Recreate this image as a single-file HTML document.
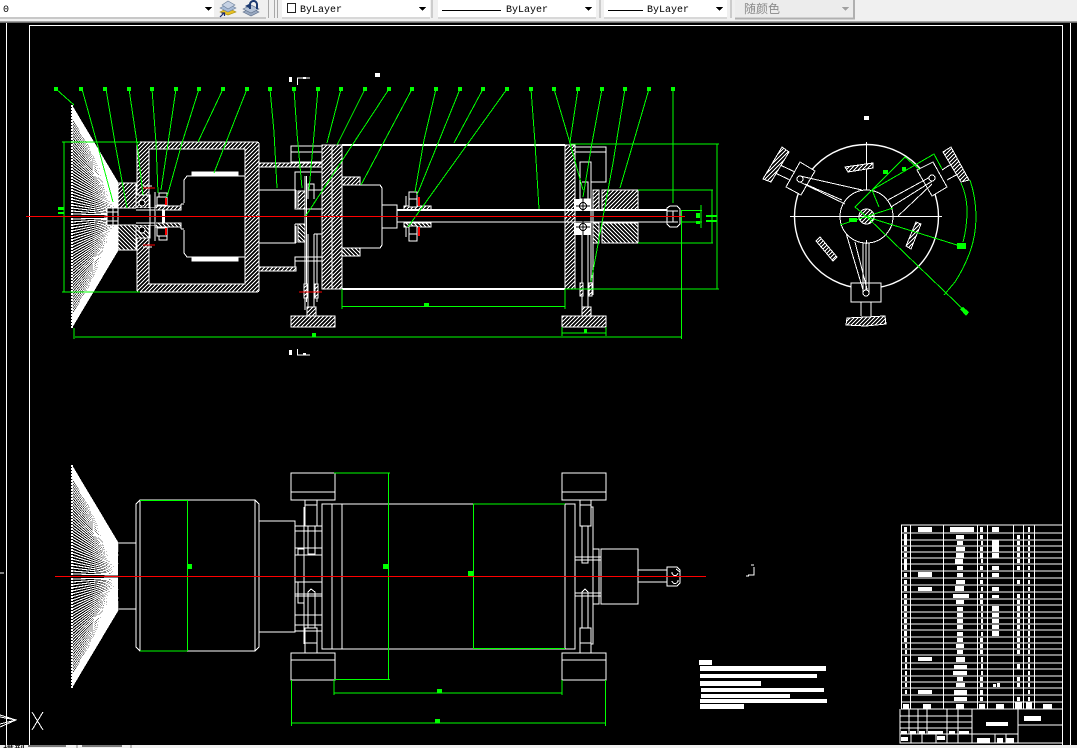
<!DOCTYPE html>
<html><head><meta charset="utf-8"><style>
html,body{margin:0;padding:0;width:1077px;height:748px;overflow:hidden;background:#000}
svg{display:block;position:absolute;left:0;top:0}
text{font-family:"Liberation Mono","Noto Sans CJK SC",monospace;font-size:10px;fill:#000}
</style></head><body>
<svg width="1077" height="748" viewBox="0 0 1077 748" xmlns="http://www.w3.org/2000/svg" shape-rendering="crispEdges">
<defs>
<pattern id="h" width="4" height="4" patternUnits="userSpaceOnUse"><rect width="4" height="4" fill="#000"/><path d="M-1 1L1 -1M0 4L4 0M3 5L5 3" stroke="#fff" stroke-width="1.2" fill="none"/></pattern>
<g id="brush"><path d="M72 214L118 215M72 211L118 214.5M72 208L118 213.6M72 205L118 212.7M72 202L118 211.8M72 199L118 210.9M72 196L118 210M72 193L118 209M72 190L118 208M72 187L118 207M72 184L118 206.4M72 181L118 205.5M72 178L118 204.6M72 175L118 203.7M72 172L118 202.8M72 169L118 201.9M72 166L118 201M72 163L118 200M72 160L118 199M72 157L118 198M72 154L118 197.4M72 151L118 196.5M72 148L118 195.6M72 145L118 194.7M72 142L118 193.8M72 139L118 192.9M72 136L118 192M72 133L118 191M72 130L118 190M72 127L118 189M72 124L118 188.4M72 121L118 187.5M72 118L118 186.6M72 115L118 185.7M72 112L118 184.8M72 109L118 183.9M72 106L118 183" stroke="#fff" stroke-width="1.1" fill="none"/><polygon points="72,105 118,183 118,190 108,178 72,118" fill="#fff"/><path d="M72 105V216" stroke="#fff" stroke-width="2" stroke-dasharray="2 1" fill="none"/></g>
<g id="tvh" fill="none" stroke="#fff">
<rect x="118" y="183" width="18" height="25" fill="url(#h)"/>
<rect x="136" y="195" width="14" height="13" fill="url(#h)"/><circle cx="142" cy="203" r="3" fill="#000"/>
<path d="M149 182V208M143 186H152M155 192V206M136 208H155"/>
<rect x="157" y="197" width="10" height="8" fill="#000"/><rect x="159" y="193" width="8" height="4" fill="#000"/>
<rect x="155" y="206" width="26" height="4" fill="url(#h)"/>
<path d="M184 203V180L187 176H245M181 204H184M181 204V210"/>
<rect x="192" y="172" width="46" height="3" fill="#fff"/>
<path d="M166 198V205" stroke="#f00" stroke-width="2"/>
<path d="M143 188H155" stroke="#f00"/>
<rect x="298" y="191" width="7" height="18" fill="url(#h)"/>
<rect x="342" y="177" width="18" height="8" fill="url(#h)"/>
<rect x="404" y="206" width="27" height="4" fill="url(#h)"/>
<rect x="409" y="192" width="8" height="15" fill="#000"/><path d="M406 196V206M409 199H417"/>
<path d="M419 197V206" stroke="#f00" stroke-width="2"/>
<rect x="593" y="190" width="6" height="20" fill="url(#h)"/>
<rect x="602" y="190" width="36" height="20" fill="url(#h)"/>
</g>
<g id="plan" fill="none" stroke="#fff">
<path d="M308 590V556M315 590V556"/>
</g>
</defs>
<rect width="1077" height="748" fill="#000"/>

<!-- drawing frame -->
<g fill="none" stroke="#fff">
<path d="M6.5 23V745"/>
<rect x="29.5" y="25.5" width="1033" height="720"/>
<path d="M1070.5 23V745"/>
<path d="M0 573H4"/>
<path d="M0 715L16 720L0 727M0 717L16 720L0 724"/>
<path d="M32 712L43 730M43 712L32 730"/>
</g>

<!-- top view -->
<use href="#brush"/><use href="#brush" transform="matrix(1 0 0 -1 0 433)"/>
<rect x="137" y="142" width="122" height="150" rx="2" fill="url(#h)" stroke="#fff"/>
<rect x="149" y="149" width="96" height="135" fill="#000" stroke="#fff"/>
<rect x="259" y="163" width="64" height="4" fill="url(#h)" stroke="#fff"/>
<rect x="259" y="267" width="37" height="4" fill="url(#h)" stroke="#fff"/>
<path d="M259 190H296M259 243H296M296 243V226M296 190V208" stroke="#fff" fill="none"/>
<rect x="107" y="208" width="11" height="17" fill="#000" stroke="#fff"/>
<path d="M113 208V225M107 212H118M107 221H118" stroke="#fff" fill="none"/>
<use href="#tvh"/><use href="#tvh" transform="matrix(1 0 0 -1 0 433)"/>
<rect x="162" y="210" width="3" height="13" fill="#fff"/>
<rect x="136" y="208" width="20" height="17" fill="#000"/>
<path d="M136 210H155M136 223H155M150 208V225M155 208V225" stroke="#fff" fill="none"/>

<g fill="none" stroke="#fff">
<rect x="291" y="146" width="31" height="16"/><path d="M291 152H322"/>
<rect x="295" y="172" width="27" height="37"/>
<path d="M295 224H305M295 224V243M322 257H295V267M295 261H322"/>
<path d="M305 176V302M306.5 176V302M317 234V298M314 234V307M308 234V307M305 293V310M317 285V302"/>
<path d="M308 199V184H314V199M308 190H322M314 234H322V257"/>
</g>
<rect x="307" y="307" width="9" height="9" fill="url(#h)" stroke="#fff"/>
<rect x="291" y="316" width="44" height="11" fill="url(#h)" stroke="#fff"/>
<rect x="304" y="284" width="3" height="14" fill="url(#h)" stroke="#fff"/><rect x="315" y="284" width="3" height="14" fill="url(#h)" stroke="#fff"/>
<path d="M299 292H322" stroke="#f00"/>

<rect x="322" y="145" width="10" height="144" fill="url(#h)" stroke="#fff"/>
<rect x="332" y="145" width="10" height="144" fill="url(#h)" stroke="#fff"/>
<rect x="565" y="145" width="10" height="144" fill="url(#h)" stroke="#fff"/>
<path d="M342 145H565M342 289H565" stroke="#fff" stroke-width="2" fill="none"/>
<path d="M342 185H380L382 188V245L380 248H342Z" fill="#000" stroke="#fff"/>
<path d="M382 205H397V228H382M397 205V228" fill="none" stroke="#fff"/>
<path d="M397 210H667" stroke="#fff" stroke-width="2" fill="none"/>
<path d="M397 222H667" stroke="#fff" fill="none"/>

<g fill="none" stroke="#fff">
<path d="M575 147H606V182H591M575 152H606"/>
<rect x="580" y="162" width="11" height="37" fill="#000"/>
<path d="M582 182H588V199M591 177V295M593 190V295M582 235V307M588 235V307M580 283V295"/>
<rect x="580" y="283" width="3" height="13" fill="url(#h)"/><rect x="589" y="283" width="3" height="13" fill="url(#h)"/>
</g>
<rect x="574" y="199" width="17" height="11" fill="#fff"/><rect x="574" y="223" width="17" height="12" fill="#fff"/>
<path d="M583 197V211M576 206H590M583 221V237M576 227H590" stroke="#000" fill="none"/>
<circle cx="583" cy="206" r="3.5" fill="none" stroke="#000"/><circle cx="583" cy="227" r="3.5" fill="none" stroke="#000"/>
<rect x="582" y="307" width="9" height="9" fill="url(#h)" stroke="#fff"/>
<rect x="562" y="316" width="44" height="11" fill="url(#h)" stroke="#fff"/>
<path d="M667 208L670 206H677L680 209V224L677 227H670L667 224ZM667 211H678M667 222H678M673 211V222" fill="#000" stroke="#fff"/>

<!-- section marks -->
<g fill="#fff"><rect x="289" y="77" width="3" height="5"/><rect x="375" y="73" width="5" height="4"/><rect x="303" y="77" width="3" height="2"/><rect x="289" y="350" width="3" height="5"/><rect x="303" y="353" width="3" height="2"/><rect x="864" y="116" width="5" height="4"/></g>
<path d="M297.500 85V78H310M297.500 349V355H310" fill="none" stroke="#fff"/>

<!-- top leaders -->
<g fill="none" stroke="#0f0">
<path d="M56 89L74 105M82 89L97 143L113 202M106 89L115 143L127 208M129 89L137 143L143 195M152 89L156 143L158 193M176 89L167 150L161 190M199 89L182 143L167 197M223 89L198 142M247 89L223 150L214 173M270 89L274 132L277 188M294 89L297 133L302 188M318 89L312 157L309 190M341 89L327 143M365 89L337 145M389 89L305 217M412 89L361 185M436 89L424 140L415 192M460 89L417 195M483 89L454 143M507 89L408 227M531 89L535 143L539 209M554 89L570 143L583 190M578 89L570 142M602 89L592 143L583 197M625 89L613 163L591 282M649 89L620 188M673 89V203"/>
<path d="M62 142H140M62 292H140M64 142V292M74 328V339M75 337H682M681.500 210V339M342 289V309M565 289V309M342 306.500H565M562 327V336M606 327V336M562 333H606M570 144H719M565 289H719M717 144V289M638 190H713M638 243H713M712 190V243M682 210.500H702M682 222H702M701 205V228"/>
</g>
<g fill="#0f0">
<rect x="54" y="87" width="4" height="4"/><rect x="79" y="87" width="4" height="4"/><rect x="103" y="87" width="4" height="4"/><rect x="127" y="87" width="4" height="4"/><rect x="150" y="87" width="4" height="4"/><rect x="174" y="87" width="4" height="4"/><rect x="197" y="87" width="4" height="4"/><rect x="221" y="87" width="4" height="4"/><rect x="245" y="87" width="4" height="4"/><rect x="268" y="87" width="4" height="4"/><rect x="292" y="87" width="4" height="4"/><rect x="316" y="87" width="4" height="4"/><rect x="339" y="87" width="4" height="4"/><rect x="363" y="87" width="4" height="4"/><rect x="387" y="87" width="4" height="4"/><rect x="410" y="87" width="4" height="4"/><rect x="434" y="87" width="4" height="4"/><rect x="458" y="87" width="4" height="4"/><rect x="481" y="87" width="4" height="4"/><rect x="505" y="87" width="4" height="4"/><rect x="529" y="87" width="4" height="4"/><rect x="552" y="87" width="4" height="4"/><rect x="576" y="87" width="4" height="4"/><rect x="600" y="87" width="4" height="4"/><rect x="623" y="87" width="4" height="4"/><rect x="647" y="87" width="4" height="4"/><rect x="671" y="87" width="4" height="4"/>
<rect x="312" y="333" width="4" height="4"/><rect x="424" y="303" width="5" height="4"/><rect x="584" y="329" width="3" height="4"/><rect x="58" y="207" width="6" height="3"/><rect x="58" y="212" width="6" height="2"/><rect x="696" y="213" width="4" height="5"/><rect x="696" y="221" width="4" height="3"/><rect x="706" y="215" width="11" height="2"/><rect x="706" y="220" width="11" height="2"/>
</g>
<path d="M26 216.500H685" stroke="#f00" fill="none"/>

<!-- side view -->
<g fill="none" stroke="#fff">
<circle cx="866.500" cy="216.500" r="72" shape-rendering="auto" stroke-width="1.4"/>
<circle cx="866.500" cy="216.500" r="26.500" fill="#000"/>
<circle cx="866.500" cy="216.500" r="7.500" fill="url(#h)"/>
<path d="M790 216.500H942M866.500 142V190M866.500 240V244"/>
<polygon points="800,162 815,171 801,195 786,187" fill="#000"/>
<polygon points="933,162 947,187 932,196 917,170" fill="#000"/>
<rect x="851" y="283" width="30" height="19" fill="#000"/>
<path d="M861 302V316M871 302V316M778 164L795 172M773 172L790 180M942 170L953 163M947 180L958 174"/>
<polygon points="782,147 789,152 771,182 763,179" fill="url(#h)"/>
<polygon points="943,152 951,147 969,180 961,182" fill="url(#h)"/>
<polygon points="847,318 885,316 886,324 866,326 846,325" fill="url(#h)"/>
<path d="M800 176L862 190M800 182L845 204M805 184L842 200M932 176L888 200M934 180L891 207M932 184L898 216M864 293L846 233M868 293L855 242M863 243V293M866 243V293M869 243V293"/>
<circle cx="800" cy="179" r="3" fill="#000"/><circle cx="932" cy="178" r="3" fill="#000"/><circle cx="866" cy="293" r="3" fill="#000"/>
<polygon points="845,167 873,163 873,168 848,172" fill="url(#h)"/>
<polygon points="816,241 820,237 837,257 833,261" fill="url(#h)"/>
<polygon points="916,222 921,224 911,249 906,246" fill="url(#h)"/>
</g>
<g fill="none" stroke="#0f0">
<path d="M961 183Q967 196 967 210Q967 228 963 242M970 180Q976 198 976 217Q976 235 970 252Q964 268 955 282L944 295"/>
<path d="M867 217L968 314M840 225L893 208M867 217L957 245M855 207L905 157L920 170M872 190L934 154L942 169M872 190L855 207L867 217M872 190L879 207"/>
</g>
<g fill="#0f0"><polygon points="960,309 963,307 969,312 966,316"/><rect x="957" y="243" width="9" height="6"/><rect x="883" y="170" width="5" height="4"/><rect x="902" y="167" width="4" height="4"/><rect x="849" y="218" width="8" height="4"/></g>

<!-- plan view -->
<use href="#brush" transform="translate(0 360)"/><use href="#brush" transform="matrix(1 0 0 -1 0 793)"/>
<g fill="none" stroke="#fff">
<path d="M118 543H136M118 609H136"/>
<path d="M140 500H255L259 504V647L255 651H140L136 647V504ZM140 500V651M255 500V651"/>
<rect x="259" y="521" width="36" height="111"/>
<rect x="322" y="504" width="253" height="145"/><path d="M332 504V649M342 504V649M565 504V649"/>
<rect x="291" y="473" width="44" height="27"/><path d="M291 492H335"/>
<rect x="291" y="653" width="44" height="27"/><path d="M291 660H335"/>
<rect x="562" y="473" width="44" height="27"/><path d="M562 492H606"/>
<rect x="562" y="653" width="44" height="27"/><path d="M562 660H606"/>
<path d="M305 500H317V526H305ZM305 505H317M304 507V644M295 526H322M295 531H322M295 548H322M295 555H322M295 526V555M298 548V555M298 549H304"/>
<rect x="308" y="526" width="7" height="28"/>
<path d="M295 582H322M295 582V631H322M298 582V603H304V582M295 594H322M295 596H322M295 615H322M295 625H322"/>
<path d="M308 628V592L311 589L315 592V628"/>
<path d="M305 628H317V653H305ZM305 643H317"/>
<path d="M580 500H591V526H580ZM580 505H591M591 507H593V644H591M575 557H601M575 560H601M575 593H601M575 596H601"/>
<path d="M582 526V563H588V526M582 628V592L585 589L588 592V628"/>
<path d="M580 628H591V653H580ZM580 643H591"/>
<rect x="593" y="549" width="6" height="55"/><rect x="601" y="549" width="37" height="55"/>
<path d="M638 570H667M638 582H667"/>
<path d="M667 567H677L680 570V583L677 586H667ZM676 569L680 572M672 572A2 2 0 1 0 678 573M672 581A2 2 0 1 0 678 580"/>
<path d="M748 575H754V567M751 565H754M746 576H749"/>
</g>
<g fill="none" stroke="#0f0">
<path d="M140 500.500H187M140 651H187M187.500 500V651M334 473H390M334 679.500H390M388.500 473V680M473 504H565M473 648.500H565M473.500 504V649M334 680V695M562 680V695M334 693H562M291.500 680V726M605.500 680V726M291.500 723H605.500"/>
</g>
<g fill="#0f0"><rect x="188" y="564" width="4" height="5"/><rect x="383" y="564" width="5" height="5"/><rect x="468" y="571" width="5" height="5"/><rect x="437" y="689" width="5" height="4"/><rect x="435" y="719" width="5" height="4"/></g>
<path d="M55 576.500H706" stroke="#f00" fill="none"/>

<!-- notes -->
<g fill="#fff">
<rect x="699" y="660" width="13" height="5"/><rect x="700" y="666" width="126" height="5"/><rect x="700" y="674" width="117" height="4"/><rect x="700" y="681" width="61" height="5"/><rect x="701" y="688" width="123" height="4"/><rect x="701" y="694" width="89" height="4"/><rect x="700" y="699" width="127" height="4"/><rect x="700" y="704" width="44" height="5"/>
</g>

<!-- parts table -->
<g fill="none" stroke="#fff">
<path d="M901 525H1062M901 533H1062M901 540H1062M901 546H1062M901 552H1062M901 558H1062M901 564H1062M901 571H1062M901 578H1062M901 585H1062M901 592H1062M901 599H1062M901 605H1062M901 612H1062M901 618H1062M901 624H1062M901 630H1062M901 637H1062M901 643H1062M901 649H1062M901 655H1062M901 663H1062M901 669H1062M901 676H1062M901 682H1062M901 688H1062M901 695H1062M901 702H1062M901 709H1062"/>
<path d="M901.500 525V709M910.500 525V709M943.500 525V709M977.500 525V709M987.500 525V709M1013.500 525V709M1023.500 525V709M1034.500 525V709"/>
<path d="M900 709V743H1062M972 709V743M1018 709V743M1018 725H1062M972 734H1018M995 734V743M1006 734V743"/>
<path d="M900 716H972M900 722H972M900 728H972M900 734H972M909 709V734M918 709V734M927 709V734M947 709V734M958 709V734M911 734V743M922 734V743M936 734V743M947 734V743M958 734V743"/>
</g>
<g fill="#fff">
<rect x="904" y="527" width="3" height="5"/><rect x="918" y="527" width="14" height="5"/><rect x="950" y="527" width="24" height="5"/><rect x="980" y="527" width="3" height="5"/><rect x="992" y="527" width="7" height="5"/><rect x="1028" y="527" width="2" height="5"/>
<rect x="904" y="534" width="3" height="11"/><rect x="956" y="535" width="8" height="4"/><rect x="980" y="535" width="3" height="4"/><rect x="992" y="540" width="7" height="12"/><rect x="1017" y="535" width="3" height="4"/><rect x="1028" y="535" width="2" height="4"/>
<rect x="957" y="541" width="6" height="4"/><rect x="981" y="541" width="2" height="4"/><rect x="1017" y="541" width="3" height="4"/><rect x="1028" y="541" width="2" height="4"/>
<rect x="904" y="547" width="3" height="4"/><rect x="956" y="547" width="9" height="4"/><rect x="980" y="547" width="3" height="4"/><rect x="1017" y="547" width="3" height="4"/><rect x="1028" y="547" width="2" height="4"/>
<rect x="904" y="553" width="3" height="4"/><rect x="956" y="553" width="8" height="5"/><rect x="980" y="553" width="3" height="5"/><rect x="992" y="553" width="7" height="5"/><rect x="1017" y="553" width="3" height="4"/><rect x="1028" y="553" width="2" height="4"/>
<rect x="904" y="559" width="3" height="11"/><rect x="955" y="559" width="8" height="5"/><rect x="981" y="559" width="2" height="4"/><rect x="1017" y="559" width="3" height="4"/><rect x="1028" y="559" width="2" height="4"/>
<rect x="957" y="566" width="6" height="4"/><rect x="980" y="566" width="3" height="4"/><rect x="992" y="566" width="7" height="4"/><rect x="1017" y="566" width="3" height="4"/><rect x="1028" y="566" width="2" height="4"/>
<rect x="904" y="573" width="3" height="4"/><rect x="918" y="572" width="14" height="5"/><rect x="957" y="573" width="6" height="4"/><rect x="981" y="573" width="2" height="4"/><rect x="992" y="573" width="7" height="4"/><rect x="1028" y="573" width="2" height="4"/>
<rect x="904" y="580" width="3" height="4"/><rect x="956" y="580" width="9" height="4"/><rect x="980" y="580" width="3" height="4"/><rect x="1017" y="580" width="3" height="4"/><rect x="1028" y="580" width="2" height="4"/>
<rect x="904" y="586" width="3" height="5"/><rect x="918" y="587" width="14" height="4"/><rect x="955" y="586" width="9" height="5"/><rect x="981" y="587" width="2" height="4"/><rect x="992" y="587" width="7" height="4"/><rect x="1028" y="587" width="2" height="4"/>
<rect x="904" y="594" width="3" height="4"/><rect x="953" y="594" width="16" height="4"/><rect x="980" y="594" width="3" height="4"/><rect x="992" y="595" width="7" height="3"/><rect x="1017" y="594" width="3" height="4"/><rect x="1028" y="594" width="2" height="4"/>
<rect x="904" y="600" width="3" height="4"/><rect x="956" y="600" width="8" height="4"/><rect x="980" y="600" width="3" height="4"/><rect x="1017" y="600" width="3" height="4"/><rect x="1028" y="600" width="2" height="4"/>
<rect x="904" y="606" width="3" height="5"/><rect x="957" y="607" width="6" height="4"/><rect x="981" y="606" width="2" height="5"/><rect x="992" y="606" width="7" height="5"/><rect x="1017" y="606" width="3" height="5"/><rect x="1028" y="606" width="2" height="5"/>
<rect x="904" y="613" width="3" height="4"/><rect x="957" y="613" width="6" height="4"/><rect x="981" y="613" width="2" height="4"/><rect x="992" y="613" width="7" height="4"/><rect x="1017" y="613" width="3" height="4"/><rect x="1028" y="613" width="2" height="4"/>
<rect x="904" y="619" width="3" height="4"/><rect x="957" y="619" width="6" height="4"/><rect x="981" y="619" width="2" height="4"/><rect x="992" y="619" width="7" height="4"/><rect x="1017" y="619" width="3" height="4"/><rect x="1028" y="619" width="2" height="4"/>
<rect x="904" y="625" width="3" height="4"/><rect x="957" y="625" width="6" height="4"/><rect x="981" y="625" width="2" height="4"/><rect x="992" y="625" width="7" height="4"/><rect x="1017" y="625" width="3" height="4"/><rect x="1028" y="625" width="2" height="4"/>
<rect x="904" y="631" width="3" height="5"/><rect x="957" y="632" width="6" height="4"/><rect x="981" y="632" width="2" height="4"/><rect x="992" y="631" width="7" height="5"/><rect x="1017" y="631" width="3" height="5"/><rect x="1028" y="631" width="2" height="5"/>
<rect x="904" y="638" width="3" height="4"/><rect x="957" y="638" width="6" height="4"/><rect x="980" y="638" width="3" height="4"/><rect x="1017" y="638" width="3" height="4"/><rect x="1028" y="638" width="2" height="4"/>
<rect x="905" y="644" width="2" height="4"/><rect x="956" y="644" width="8" height="4"/><rect x="980" y="644" width="3" height="4"/><rect x="1017" y="644" width="3" height="4"/><rect x="1028" y="644" width="2" height="4"/>
<rect x="905" y="650" width="2" height="4"/><rect x="957" y="650" width="6" height="4"/><rect x="980" y="650" width="3" height="4"/><rect x="1017" y="650" width="3" height="4"/><rect x="1028" y="650" width="2" height="4"/>
<rect x="905" y="657" width="2" height="5"/><rect x="918" y="657" width="14" height="4"/><rect x="956" y="657" width="9" height="5"/><rect x="981" y="657" width="2" height="5"/><rect x="1028" y="657" width="2" height="5"/>
<rect x="905" y="664" width="2" height="5"/><rect x="954" y="665" width="13" height="4"/><rect x="981" y="664" width="2" height="5"/><rect x="1017" y="664" width="3" height="5"/><rect x="1028" y="664" width="2" height="5"/>
<rect x="905" y="671" width="2" height="4"/><rect x="953" y="671" width="14" height="4"/><rect x="981" y="671" width="2" height="4"/><rect x="1028" y="671" width="2" height="4"/>
<rect x="905" y="677" width="2" height="4"/><rect x="957" y="677" width="6" height="4"/><rect x="980" y="677" width="3" height="4"/><rect x="1017" y="677" width="3" height="4"/><rect x="1028" y="677" width="2" height="4"/>
<rect x="905" y="683" width="2" height="4"/><rect x="956" y="683" width="9" height="4"/><rect x="980" y="683" width="3" height="4"/><rect x="993" y="684" width="3" height="3"/><rect x="997" y="683" width="3" height="4"/><rect x="1017" y="683" width="3" height="4"/><rect x="1028" y="683" width="2" height="4"/>
<rect x="905" y="690" width="2" height="4"/><rect x="918" y="690" width="14" height="4"/><rect x="954" y="690" width="13" height="5"/><rect x="980" y="690" width="3" height="5"/><rect x="1028" y="690" width="2" height="4"/>
<rect x="954" y="697" width="13" height="4"/><rect x="980" y="697" width="3" height="4"/><rect x="1017" y="697" width="3" height="4"/><rect x="1028" y="697" width="2" height="4"/>
<rect x="903" y="704" width="6" height="5"/><rect x="923" y="704" width="8" height="5"/><rect x="956" y="704" width="8" height="5"/><rect x="979" y="704" width="6" height="5"/><rect x="996" y="704" width="8" height="5"/><rect x="1015" y="702" width="7" height="7"/><rect x="1026" y="702" width="6" height="7"/><rect x="1043" y="704" width="9" height="5"/>
<rect x="986" y="722" width="22" height="4"/><rect x="1024" y="716" width="17" height="5"/><rect x="977" y="738" width="13" height="5"/><rect x="997" y="738" width="6" height="5"/><rect x="1006" y="738" width="8" height="5"/>
<rect x="901" y="731" width="6" height="3"/><rect x="910" y="731" width="6" height="3"/><rect x="919" y="731" width="6" height="3"/><rect x="928" y="731" width="15" height="3"/><rect x="949" y="731" width="6" height="3"/><rect x="959" y="731" width="10" height="3"/><rect x="901" y="737" width="7" height="4"/><rect x="937" y="736" width="8" height="4"/>
</g>

<!-- toolbar -->
<rect x="0" y="0" width="1077" height="22" fill="#f0f0f0"/>
<rect x="0" y="21" width="1077" height="1" fill="#a0a0a0"/>
<rect x="0" y="22" width="1077" height="1" fill="#6a6a6a"/>
<rect x="0" y="0" width="214" height="17" fill="#fff"/><rect x="0" y="17" width="266" height="2" fill="#c8c8c8"/>
<rect x="282" y="0" width="148" height="17" fill="#fff"/><rect x="282" y="17" width="148" height="2" fill="#d8d8d8"/>
<rect x="438" y="0" width="158" height="17" fill="#fff"/><rect x="438" y="17" width="158" height="2" fill="#d8d8d8"/>
<rect x="604" y="0" width="123" height="17" fill="#fff"/><rect x="604" y="17" width="123" height="2" fill="#d8d8d8"/>
<rect x="735" y="0" width="118" height="17" fill="#ececec"/><path d="M854 0V18.500H735" fill="none" stroke="#b0b0b0" stroke-width="2"/>
<path d="M268.500 0V18M274.500 0V18M277.500 0V18M432 0V18M600 0V18M731 0V18" stroke="#a8a8a8" fill="none"/>
<g fill="#000"><polygon points="205,7 212,7 208.500,11"/><polygon points="419,7 426,7 422.500,11"/><polygon points="585,7 592,7 588.500,11"/><polygon points="716,7 723,7 719.500,11"/></g>
<polygon points="842,7 849,7 845.500,11" fill="#a0a0a0"/>
<!-- layer icons -->
<g shape-rendering="auto">
<polygon points="220,12 228,8 236,12 228,15" fill="#e8c020" stroke="#a08810" stroke-width=".6"/>
<polygon points="220,8 228,4 236,8 228,12" fill="#a8bcd8" stroke="#6a7e98" stroke-width=".6"/>
<polygon points="222,5 228,1 235,5 228,9" fill="#c6d2e4" stroke="#6a7e98" stroke-width=".6"/>
<path d="M220 17L224 13M221.500 13H224.500V16" stroke="#1a2a70" fill="none" stroke-width="1.2"/>
<polygon points="243,12 251,8 259,12 251,16" fill="#98a8c0" stroke="#60708a" stroke-width=".6"/>
<polygon points="243,9 251,5 259,9 251,13" fill="#b4c2d6" stroke="#60708a" stroke-width=".6"/>
<path d="M250 9V5A3.500 3.500 0 0 1 257 4V9" fill="none" stroke="#1c3a70" stroke-width="2"/>
<polygon points="245,6 251,3 251,9" fill="#1c3a70"/>
</g>
<text x="3" y="12">0</text>
<rect x="287.500" y="3.500" width="8" height="9" fill="#fff" stroke="#222"/>
<text x="300" y="12">ByLayer</text>
<path d="M442 10.500H501M608 10.500H643" stroke="#000" fill="none"/>
<text x="506" y="12">ByLayer</text>
<text x="647" y="12">ByLayer</text>
<text x="744" y="13" style="font-size:12px;fill:#8a8a8a;font-family:'Liberation Sans','Noto Sans CJK SC',sans-serif">随颜色</text>

<!-- bottom tabs -->
<rect x="0" y="745" width="1077" height="3" fill="#f0f0f0"/>
<path d="M23 745V748M77 745V748M131 745V748" stroke="#808080" fill="none"/>
<path d="M28 746H66M82 746H122" stroke="#000" fill="none"/>
<text x="3" y="754" style="font-size:11px;fill:#000;font-family:'Liberation Sans','Noto Sans CJK SC',sans-serif">模型</text>
</svg>
</body></html>
